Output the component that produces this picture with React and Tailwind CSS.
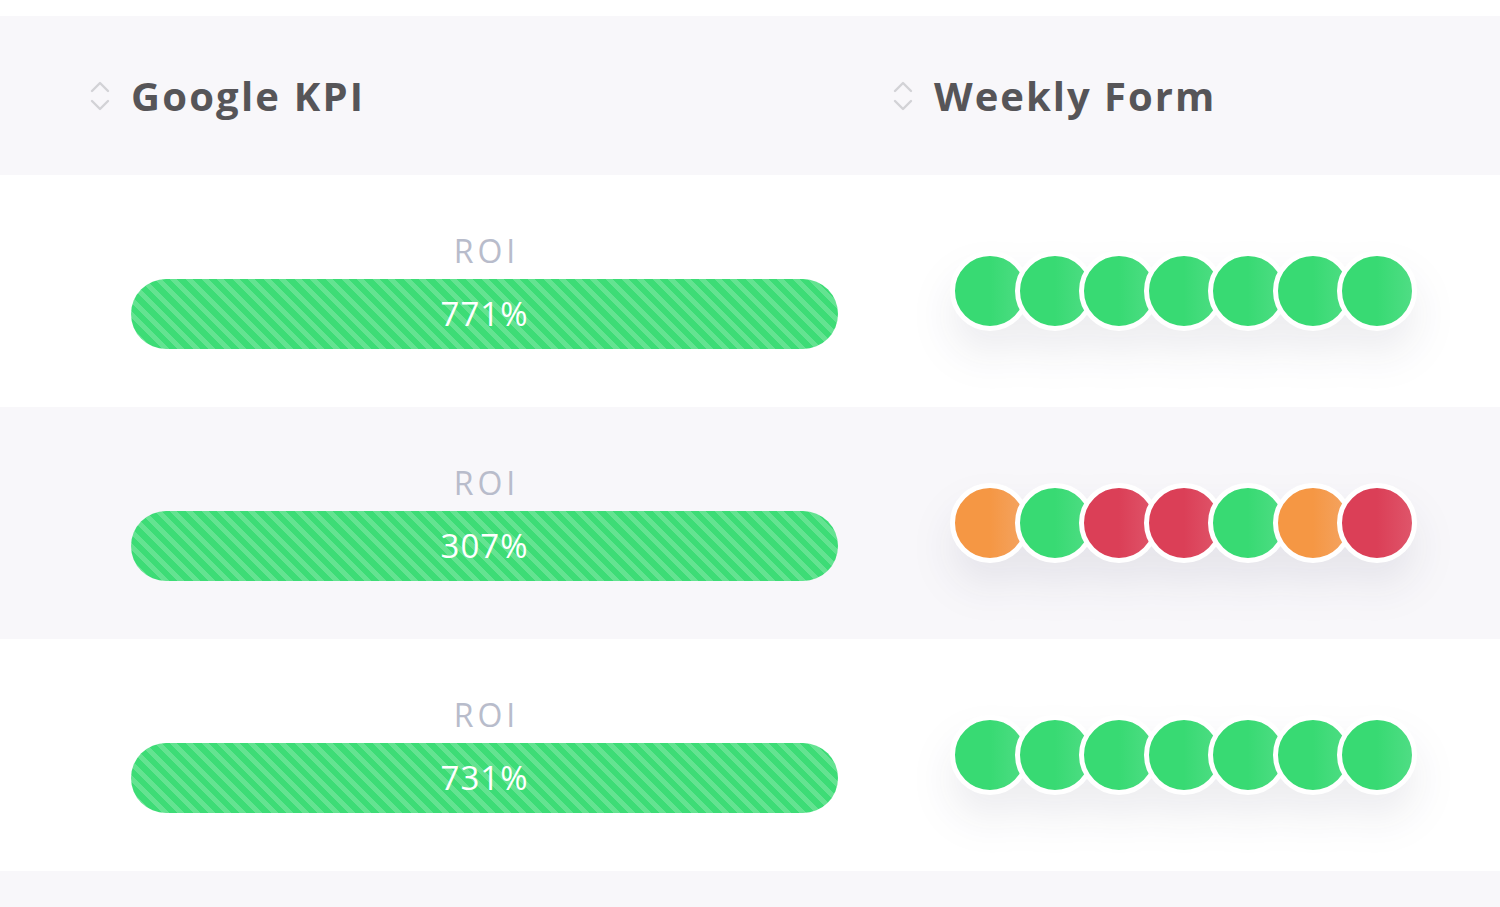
import React from 'react'

const rows = [
  { roi: '771%', form: ['w', 'w', 'w', 'w', 'w', 'w', 'w'] },
  { roi: '307%', form: ['d', 'w', 'l', 'l', 'w', 'd', 'l'] },
  { roi: '731%', form: ['w', 'w', 'w', 'w', 'w', 'w', 'w'] },
]

const dotColor = {
  w: 'bg-[linear-gradient(to_right,#38da73_50%,#4fdd84)]',
  l: 'bg-[linear-gradient(to_right,#db3f57_50%,#df556a)]',
  d: 'bg-[linear-gradient(to_right,#f59744_50%,#f4a462)]',
}

const SortIcon = () => (
  <svg width="22" height="36" viewBox="0 0 22 36" fill="none" stroke="#d2d2d6" strokeWidth="2.4" strokeLinecap="round" strokeLinejoin="round">
    <path d="M3 13 L11 5 L19 13" />
    <path d="M3 23 L11 31 L19 23" />
  </svg>
)

const FormDots = ({ form }) => (
  <div className="flex drop-shadow-[0_24px_20px_rgba(30,30,60,0.08)]">
    {form.map((r, i) => (
      <div
        key={i}
        className={`w-[80px] h-[80px] rounded-full border-[5px] border-white ${dotColor[r]} ${i > 0 ? '-ml-[15.5px]' : ''}`}
      />
    ))}
  </div>
)

export default function App() {
  return (
    <div className="w-[1500px] h-[907px] bg-white overflow-hidden pt-[16px] font-['Open_Sans','Noto_Sans',sans-serif]">
      <div className="flex h-[159px] bg-[#f8f7fa] items-center">
        <div className="w-[880px] flex items-center pl-[89px] gap-[20px]">
          <SortIcon />
          <span className="text-[40px] font-bold text-[#565558] tracking-[2.2px]">Google KPI</span>
        </div>
        <div className="flex items-center pl-[12px] gap-[20px]">
          <SortIcon />
          <span className="text-[40px] font-bold text-[#565558] tracking-[2px]">Weekly Form</span>
        </div>
      </div>
      {rows.map((row, i) => (
        <div key={i} className={`flex h-[232px] items-center ${i % 2 === 1 ? 'bg-[#f8f7fa]' : 'bg-white'}`}>
          <div className="w-[880px] pl-[131px] flex flex-col">
            <div className="w-[707px] text-center text-[32px] leading-[32px] text-[#b8bccb] tracking-[4px] pl-[4px] mb-[12px] mt-[2px]">ROI</div>
            <div className="w-[707px] h-[70px] rounded-full bg-[#3ddc76] bg-[image:repeating-linear-gradient(45deg,rgba(255,255,255,0.2)_0px,rgba(255,255,255,0.2)_5px,transparent_5px,transparent_11px)] flex items-center justify-center text-white text-[33px] font-medium tracking-[1px]">
              {row.roi}
            </div>
          </div>
          <div className="pl-[70px]">
            <FormDots form={row.form} />
          </div>
        </div>
      ))}
      <div className="h-[60px] bg-[#f8f7fa]" />
    </div>
  )
}
